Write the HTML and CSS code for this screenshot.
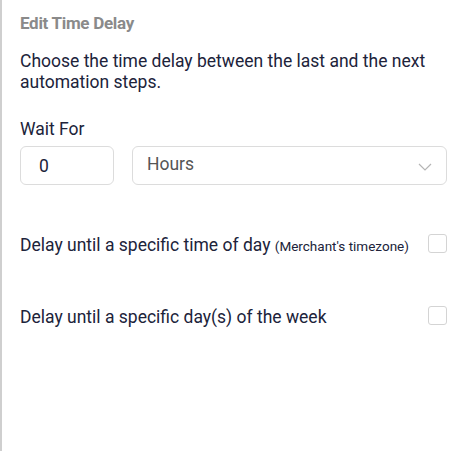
FILE: index.html
```html
<!DOCTYPE html>
<html>
<head>
<meta charset="utf-8">
<link rel="stylesheet" href="styles.css">
</head>
<body>
<div class="panel">
  <h1 class="title">Edit Time Delay</h1>
  <p class="desc">Choose the time delay between the last and the next automation steps.</p>
  <div class="label">Wait For</div>
  <div class="inputs">
    <div class="field num">0</div>
    <div class="field select">
      <span>Hours</span>
      <svg class="chev" width="14" height="8" viewBox="0 0 14 8"><path d="M1 1 L7 7 L13 1" fill="none" stroke="#b5b5b5" stroke-width="1.2"/></svg>
    </div>
  </div>
  <div class="row first">
    <span>Delay until a specific time of day <small>(Merchant's timezone)</small></span>
    <span class="box"></span>
  </div>
  <div class="row">
    <span>Delay until a specific day(s) of the week</span>
    <span class="box"></span>
  </div>
</div>
</body>
</html>
```
FILE: styles.css
```css
html, body { margin: 0; padding: 0; background: #fff; }
body { font-family: Roboto, "Noto Sans", sans-serif; color: #20233a; }
.panel {
  border-left: 2px solid #cfcfcf;
  height: 451px;
  box-sizing: border-box;
  padding: 13px 20px 0 18px;
}
.title { margin: 0; font-size: 17px; font-weight: 700; color: #8a8a8a; line-height: 20px; letter-spacing: -0.3px; }
.desc { margin: 17.5px 0 0; font-size: 17.5px; line-height: 21px; }
.label { margin-top: 25.5px; font-size: 17.5px; line-height: 23px; }
.inputs { display: flex; gap: 18px; margin-top: 5px; }
.field {
  height: 39px; box-sizing: border-box; border: 1px solid #dcdcdc; border-radius: 6px;
  display: flex; align-items: center; font-size: 17.5px;
}
.num { width: 94px; padding-left: 18px; }
.select { flex: 1; padding: 0 14px 0 14px; justify-content: space-between; color: #555; }
.select span { margin-top: -4px; }
.chev { margin-top: 3px; }
.row { display: flex; justify-content: space-between; align-items: center; font-size: 17.5px; line-height: 23px; }
.row.first { margin-top: 48.5px; }
.row + .row { margin-top: 48.5px; }
.row small { font-size: 13.5px; }
.box { width: 19px; height: 19px; box-sizing: border-box; border: 1px solid #d4d4d4; border-radius: 3px; margin-top: -4px; }
```
